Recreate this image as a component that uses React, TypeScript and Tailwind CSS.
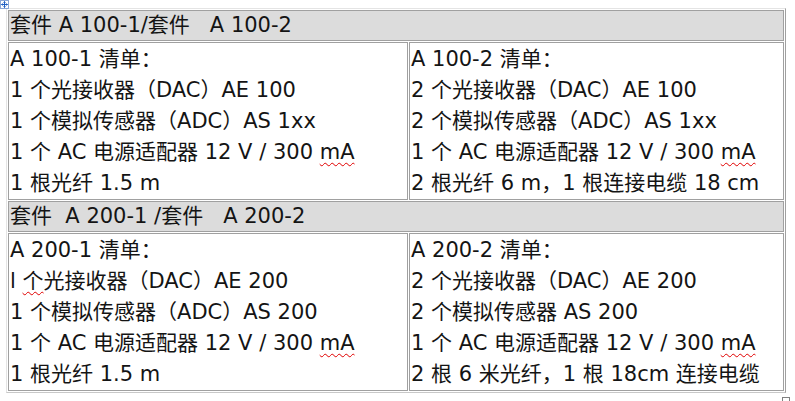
import React from "react";

const kits = [
  {
    title: "套件 A 100-1/套件   A 100-2",
    left: [
      "A 100-1 清单：",
      "1 个光接收器（DAC）AE 100",
      "1 个模拟传感器（ADC）AS 1xx",
      "ADAPTER",
      "1 根光纤 1.5 m",
    ],
    right: [
      "A 100-2 清单：",
      "2 个光接收器（DAC）AE 100",
      "2 个模拟传感器（ADC）AS 1xx",
      "ADAPTER",
      "2 根光纤 6 m，1 根连接电缆 18 cm",
    ],
  },
  {
    title: "套件  A 200-1 /套件   A 200-2",
    left: [
      "A 200-1 清单：",
      "TYPO",
      "1 个模拟传感器（ADC）AS 200",
      "ADAPTER",
      "1 根光纤 1.5 m",
    ],
    right: [
      "A 200-2 清单：",
      "2 个光接收器（DAC）AE 200",
      "2 个模拟传感器 AS 200",
      "ADAPTER",
      "2 根 6 米光纤，1 根 18cm 连接电缆",
    ],
  },
];

const Line: React.FC<{ text: string }> = ({ text }) => {
  if (text === "ADAPTER") {
    return (
      <div>
        1 个 AC 电源适配器 12 V / 300{" "}
        <span className="underline decoration-wavy decoration-[#e00000] decoration-1 underline-offset-[3px]">
          mA
        </span>
      </div>
    );
  }
  if (text === "TYPO") {
    return (
      <div>
        l{" "}
        <span className="underline decoration-wavy decoration-[#e00000] decoration-1 underline-offset-[3px]">
          个
        </span>
        光接收器（DAC）AE 200
      </div>
    );
  }
  return <div>{text}</div>;
};

export default function App() {
  return (
    <div
      className="relative w-[795px] h-[401px] overflow-hidden bg-white text-[#141414] text-[21px]"
      style={{ fontFamily: '"DejaVu Sans", "Noto Sans CJK SC", sans-serif' }}
    >
      {/* table move handle */}
      <svg
        className="absolute left-0 top-0"
        width="9"
        height="9"
        viewBox="0 0 9 9"
      >
        <rect x="0.5" y="0.5" width="8" height="8" fill="#fff" stroke="#8aa6d6" />
        <path
          d="M4.5 1.5v6M1.5 4.5h6M3.5 2.5l1-1 1 1M3.5 6.5l1 1 1-1M2.5 3.5l-1 1 1 1M6.5 3.5l1 1-1 1"
          stroke="#1f5fc4"
          strokeWidth="1"
          fill="none"
        />
      </svg>

      <div className="pt-[8px] pl-[6px]">
        <table className="w-[780px] border-separate border-spacing-[1px] border border-t-[#e4e4e4] border-l-[#e4e4e4] border-r-[#a0a0a0] border-b-[#c8c8c8]">
          <tbody>
            {kits.map((kit, i) => (
              <React.Fragment key={i}>
                <tr>
                  <td
                    colSpan={2}
                    className="h-[31px] border border-[#a0a0a0] bg-[#dcdcdc] px-px py-0 leading-[29px] whitespace-pre"
                  >
                    {kit.title}
                  </td>
                </tr>
                <tr>
                  <td className="w-[400px] border border-[#a0a0a0] px-px pt-[1px] pb-0 align-top leading-[31px]">
                    {kit.left.map((t, j) => (
                      <Line key={j} text={t} />
                    ))}
                  </td>
                  <td className="border border-[#a0a0a0] px-px pt-[1px] pb-0 align-top leading-[31px]">
                    {kit.right.map((t, j) => (
                      <Line key={j} text={t} />
                    ))}
                  </td>
                </tr>
              </React.Fragment>
            ))}
          </tbody>
        </table>
      </div>

      {/* table resize handle */}
      <div className="absolute left-[782px] top-[397px] w-[8px] h-[8px] border border-[#808080] bg-white" />
    </div>
  );
}
